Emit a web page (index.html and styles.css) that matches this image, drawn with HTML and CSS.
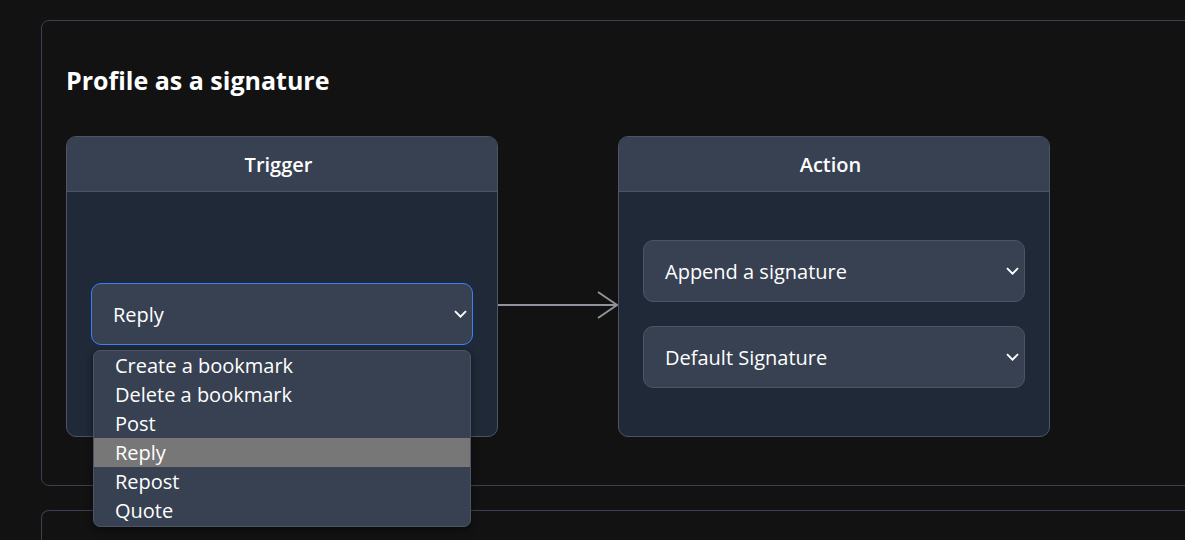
FILE: index.html
```html
<!DOCTYPE html>
<html lang="en">
<head>
  <meta charset="UTF-8">
  <title>Profile as a signature</title>
  <meta name="viewport" content="width=device-width, initial-scale=1">
  <link rel="stylesheet" href="styles.css">
</head>
<body>
  <section class="panel">
    <h2>Profile as a signature</h2>

    <div class="flow">
      <div class="box">
        <div class="box-head">Trigger</div>
        <div class="box-body">
          <div class="select-wrap">
            <div class="select focused">
              <span>Reply</span>
              <svg class="chev" viewBox="0 0 13 8" width="13" height="8"><path d="M1 1.2l5.5 5.5 5.5-5.5" fill="none" stroke="#fff" stroke-width="1.9"/></svg>
            </div>
            <ul class="menu">
              <li>Create a bookmark</li>
              <li>Delete a bookmark</li>
              <li>Post</li>
              <li class="active">Reply</li>
              <li>Repost</li>
              <li>Quote</li>
            </ul>
          </div>
        </div>
      </div>

      <div class="arrow">
        <svg viewBox="0 0 120 30" width="120" height="30"><path d="M0 15H119M100 2l19 13-19 13" fill="none" stroke="#8f949c" stroke-width="2"/></svg>
      </div>

      <div class="box">
        <div class="box-head">Action</div>
        <div class="box-body">
          <div class="select">
            <span>Append a signature</span>
            <svg class="chev" viewBox="0 0 13 8" width="13" height="8"><path d="M1 1.2l5.5 5.5 5.5-5.5" fill="none" stroke="#fff" stroke-width="1.9"/></svg>
          </div>
          <div class="select">
            <span>Default Signature</span>
            <svg class="chev" viewBox="0 0 13 8" width="13" height="8"><path d="M1 1.2l5.5 5.5 5.5-5.5" fill="none" stroke="#fff" stroke-width="1.9"/></svg>
          </div>
        </div>
      </div>
    </div>
  </section>

  <section class="panel next"></section>
</body>
</html>
```

FILE: styles.css
```css
body {
  margin: 0;
  padding: 20px 0 0 41px;
  background-color: #121212;
  color: #fff;
  font-family: 'Open Sans', 'Noto Sans', sans-serif;
  overflow: hidden;
  height: 540px;
  box-sizing: border-box;
}

.panel {
  width: 1200px;
  height: 466px;
  box-sizing: border-box;
  border: 1px solid #374151;
  border-radius: 8px;
  padding: 0 24px;
}

.panel.next {
  margin-top: 24px;
  height: 30px;
  border-bottom: none;
  border-radius: 8px 8px 0 0;
}

h2 {
  margin: 0;
  padding-top: 41px;
  font-size: 25px;
  line-height: 36px;
  font-weight: 700;
}

.flow {
  display: flex;
  align-items: flex-start;
  margin-top: 38px;
}

.box {
  width: 432px;
  height: 301px;
  box-sizing: border-box;
  border: 1px solid #4b5563;
  border-radius: 10px;
  background-color: #1f2937;
  display: flex;
  flex-direction: column;
}

.box-head {
  height: 55px;
  box-sizing: border-box;
  border-bottom: 1px solid #4b5563;
  background-color: #374151;
  border-radius: 9px 9px 0 0;
  display: flex;
  align-items: center;
  justify-content: center;
  padding-right: 7px;
  font-size: 20px;
  font-weight: 600;
}

.box-body {
  flex: 1;
  display: flex;
  flex-direction: column;
  justify-content: center;
  gap: 24px;
  padding: 0 24px;
}

.arrow {
  width: 120px;
  display: flex;
  margin-top: 154px;
}

.select-wrap {
  position: relative;
}

.select {
  height: 62px;
  box-sizing: border-box;
  border: 1px solid #4b5563;
  border-radius: 10px;
  background-color: #374151;
  display: flex;
  align-items: center;
  justify-content: space-between;
  padding: 0 5px 0 21px;
  font-size: 20px;
}

.select.focused {
  border-color: #3b82f6;
}

.menu {
  position: absolute;
  top: 67px;
  left: 2px;
  right: 2px;
  margin: 0;
  padding: 0 0 1px;
  list-style: none;
  background-color: #374151;
  border: 1px solid #4b5563;
  border-radius: 7px;
  box-shadow: 0 2px 6px rgba(0, 0, 0, 0.5);
  font-size: 20px;
  line-height: 29px;
  overflow: hidden;
}

.menu li {
  padding-left: 21px;
}

.menu li.active {
  background-color: #777777;
}
```
